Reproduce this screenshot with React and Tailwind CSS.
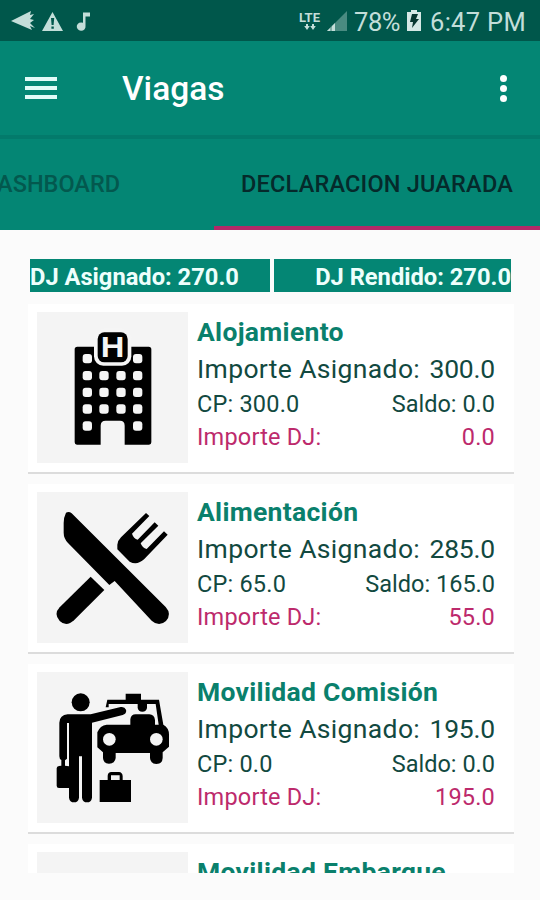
import React from "react";

const items = [
  { title: "Alojamiento", asignado: "300.0", cp: "300.0", saldo: "0.0", dj: "0.0", icon: HotelIcon },
  { title: "Alimentación", asignado: "285.0", cp: "65.0", saldo: "165.0", dj: "55.0", icon: FoodIcon },
  { title: "Movilidad Comisión", asignado: "195.0", cp: "0.0", saldo: "0.0", dj: "195.0", icon: TaxiIcon },
  { title: "Movilidad Embarque" },
];

function HotelIcon() {
  return (
    <svg viewBox="51 36 453 453" className="size-full">
      <path
        d="M172 140H386Q394 140 394 148V427Q394 434 387 434H314V377Q314 362 300 362H257Q242 362 242 377V434H171Q164 434 164 427V148Q164 140 172 140Z"
        fill="#000"
      />
      <g fill="#f5f5f5">
        <rect x="188" y="162" width="28" height="28" rx="9" />
        <rect x="339" y="162" width="28" height="28" rx="9" />
        <rect x="222" y="86" width="112" height="111" rx="28" />
        {[213, 263, 313].map((y) =>
          [188, 238, 289, 339].map((x) => (
            <rect key={`${x}-${y}`} x={x} y={y} width="28" height="28" rx="9" />
          ))
        )}
        <rect x="188" y="364" width="28" height="28" rx="9" />
        <rect x="339" y="364" width="28" height="28" rx="9" />
      </g>
      <rect x="233" y="97" width="90" height="90" rx="20" fill="#000" />
      <text
        transform="translate(278 172) scale(1.14 1)"
        textAnchor="middle"
        fill="#f5f5f5"
        fontSize="86"
        className="font-['Liberation_Sans',sans-serif] font-bold"
      >
        H
      </text>
    </svg>
  );
}

function FoodIcon() {
  return (
    <svg viewBox="51 36 453 453" className="size-full">
      <path d="M212 290L253 330L162 421Q139 442 119 423Q100 402 119 382Z" />
      <path d="M138 98Q147 93 155 100L437 381Q456 402 438 423Q417 442 395 422L284 303L268 315L144 189Q131 175 131 158V129Q131 112 138 98Z" />
      <path d="M378 99L388 108L336 161Q341 176 353 179L404 127L415 137L362 190Q367 204 380 207L432 154L443 164L373 237Q352 257 329 245L292 208V194Q293 182 303 172Z" />
    </svg>
  );
}

function TaxiIcon() {
  return (
    <svg viewBox="51 36 453 453" className="size-full">
      {/* passenger */}
      <circle cx="182" cy="127" r="27" />
      <path d="M143 163H212L302 141Q314 139 318 149Q321 161 308 165L216 188V413Q214 427 201 427Q188 427 186 413V289H177V413Q175 427 162 427Q149 427 147 413V384H117Q110 384 110 377V325Q110 319 117 318L124 317V300Q118 297 118 289V188Q119 165 143 163ZM141 189V296L135 301V317L147 319V189Z" fillRule="evenodd" />
      {/* taxi */}
      <path d="M317 101H363V119H417L430 194Q447 203 447 224V260L428 277V294Q427 312 409 312Q391 311 390 294V279H287V294Q285 311 267 311Q250 311 249 294V277L232 262V217Q240 196 260 194H331V178Q333 163 347 163H388Q403 164 405 180V194H416L407 132H381V144Q379 155 367 155Q355 155 353 144V132H266V142H257L262 119H317Z" />
      <circle cx="268" cy="238" r="19" fill="#f5f5f5" />
      <circle cx="409" cy="238" r="19" fill="#f5f5f5" />
      {/* suitcase */}
      <path d="M239 360H263V347Q264 336 274 336H297Q307 337 308 348V360H333V426H239ZM273 360H299V346H273Z" fillRule="evenodd" />
    </svg>
  );
}

function StatusBar() {
  return (
    <div className="flex h-[41px] items-center bg-[#00574b] text-[#c3ded9]">
      <svg viewBox="0 0 100 41" className="h-[41px] w-[100px]" fill="currentColor">
        <path d="M11 21L31 11L30 15L34 14L30 19L34 20L30 23L35 28L30 26L32 30Z" />
        <path fillRule="evenodd" d="M52.5 12L63 31H42ZM51 18L51.6 25H53.6L54.2 18ZM51.4 26.5V28.8H53.8V26.5Z" />
        <path d="M83 12.5H90V16.5H85.5V26A4.4 4.2 0 1 1 83 22.8Z" />
      </svg>
      <div className="ml-auto flex items-center">
        <div className="flex w-[23px] flex-col items-center">
          <span className="text-[13px] font-bold leading-[13px]">LTE</span>
          <svg viewBox="0 0 12 6" className="h-[6px] w-[12px]" fill="currentColor">
            <path d="M2 0H4V2H5.8L3 6L.2 2H2ZM8 0H10V2H11.8L9 6L6.2 2H8Z" />
          </svg>
        </div>
        <svg viewBox="0 0 22 22" className="ml-[5px] h-[22px] w-[22px]">
          <path d="M21 1V21H1Z" fill="#4a8b81" />
          <path d="M9 13V21H1Z" fill="#c3ded9" />
          <path d="M5 15V21" stroke="#16685c" strokeWidth=".8" />
        </svg>
        <span className="ml-[6px] w-[50px] pt-[3px] text-[25.5px] leading-[38px] tracking-[-0.4px]">78%</span>
        <svg viewBox="0 0 14 22" className="ml-[3px] h-[22px] w-[14px]">
          <path d="M4 0H10V2H14V21H0V2H4Z" fill="#d5e8e5" />
          <path d="M5 4H11L9 9H12L5 18L6 12H3Z" fill="#07362f" />
        </svg>
        <span className="ml-[9px] w-[110px] pt-[3px] text-[25.5px] leading-[38px] tracking-[0.3px]">6:47 PM</span>
      </div>
    </div>
  );
}

function AppBar() {
  return (
    <div className="flex h-[94px] items-center bg-[#048674] pl-[25px] pr-[33px]">
      <div className="flex w-[32px] flex-col gap-[5px]">
        <span className="h-1 bg-[#e2fbf8]" />
        <span className="h-1 bg-[#e2fbf8]" />
        <span className="h-1 bg-[#e2fbf8]" />
      </div>
      <h1 className="ml-[65px] pt-[2px] text-[33.5px] font-medium text-white">Viagas</h1>
      <div className="ml-auto flex flex-col gap-[3px]">
        <span className="size-[7px] rounded-full bg-white" />
        <span className="size-[7px] rounded-full bg-white" />
        <span className="size-[7px] rounded-full bg-white" />
      </div>
    </div>
  );
}

function Tabs() {
  return (
    <div className="flex h-[95px] border-t-[4px] border-[#037a6b] bg-[#048674] text-[23.5px] font-medium">
      <div className="flex w-[214px] items-center whitespace-nowrap">
        <span className="ml-[-18px] text-[#03584e]">DASHBOARD</span>
      </div>
      <div className="flex flex-1 items-center whitespace-nowrap border-b-[4px] border-[#b42868] pl-[27px] pt-[4px] tracking-[0.2px] text-[#052a2b]">
        DECLARACION JUARADA
      </div>
    </div>
  );
}

function Card({ item }) {
  const Icon = item.icon;
  return (
    <div className="mb-[10px] flex h-[170px] shrink-0 border-b-2 border-[#dcdcdc] bg-white pl-[9px] pr-[19px] pt-[8px]">
      <div className="size-[151px] shrink-0 bg-[#f4f4f4]">{Icon && <Icon />}</div>
      <div className="ml-[9px] flex-1 whitespace-nowrap pt-[2px] text-[#12493f]">
        <h2 className="pb-[2px] text-[26.5px] font-bold leading-[35px] tracking-[0.3px] text-[#0a806c]">{item.title}</h2>
        {item.asignado && (
          <>
            <div className="flex justify-between text-[26.5px] leading-[36px]">
              <span className="tracking-[0.35px]">Importe Asignado:</span>
              <span className="tracking-[-0.2px]">{item.asignado}</span>
            </div>
            <div className="flex justify-between text-[23.5px] leading-[34px]">
              <span className="tracking-[0.2px]">CP: {item.cp}</span>
              <span>Saldo: {item.saldo}</span>
            </div>
            <div className="flex justify-between text-[23.5px] leading-[32px] text-[#bd2a6c]">
              <span className="tracking-[0.2px]">Importe DJ:</span>
              <span className="tracking-[0.2px]">{item.dj}</span>
            </div>
          </>
        )}
      </div>
    </div>
  );
}

export default function App() {
  return (
    <div className="h-[900px] w-[540px] overflow-hidden bg-[#fbfbfb] font-['Roboto',sans-serif]">
      <StatusBar />
      <AppBar />
      <Tabs />
      <div className="mt-[29px] flex h-[33px] gap-1 whitespace-nowrap pl-[30px] pr-[29px] text-[23.7px] font-bold leading-[37px] text-[#eefffc]">
        <div className="w-[240px] bg-[#048674]">DJ Asignado: 270.0</div>
        <div className="flex-1 bg-[#048674] text-right">DJ Rendido: 270.0</div>
      </div>
      <div className="ml-[28px] mt-[12px] flex h-[569px] w-[486px] flex-col overflow-hidden">
        {items.map((item) => (
          <Card key={item.title} item={item} />
        ))}
      </div>
    </div>
  );
}
